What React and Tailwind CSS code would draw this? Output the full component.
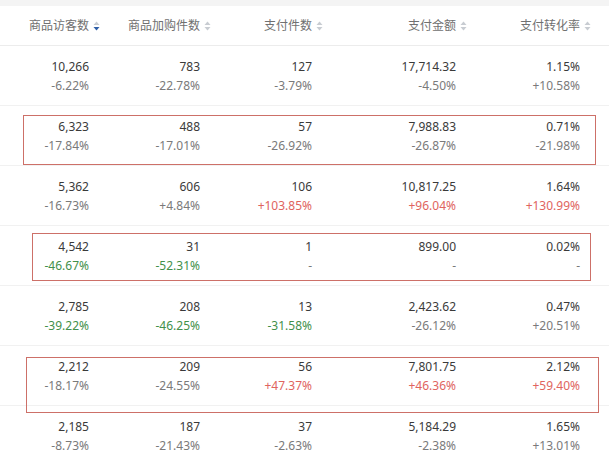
import React from "react";

const columns = ["商品访客数", "商品加购件数", "支付件数", "支付金额", "支付转化率"];
const colWidths = ["w-[105px]", "w-[111px]", "w-[112px]", "w-[144px]", "w-[124px]"];

// g = gray, r = red (up), d = green (down)
const rows = [
  { cells: [["10,266", "-6.22%", "g"], ["783", "-22.78%", "g"], ["127", "-3.79%", "g"], ["17,714.32", "-4.50%", "g"], ["1.15%", "+10.58%", "g"]] },
  { cells: [["6,323", "-17.84%", "g"], ["488", "-17.01%", "g"], ["57", "-26.92%", "g"], ["7,988.83", "-26.87%", "g"], ["0.71%", "-21.98%", "g"]], box: "top-[9px] left-[23px] w-[573px] h-[50px]" },
  { cells: [["5,362", "-16.73%", "g"], ["606", "+4.84%", "g"], ["106", "+103.85%", "r"], ["10,817.25", "+96.04%", "r"], ["1.64%", "+130.99%", "r"]] },
  { cells: [["4,542", "-46.67%", "d"], ["31", "-52.31%", "d"], ["1", "-", "g"], ["899.00", "-", "g"], ["0.02%", "-", "g"]], box: "top-[7px] left-[32px] w-[559px] h-[48px]" },
  { cells: [["2,785", "-39.22%", "d"], ["208", "-46.25%", "d"], ["13", "-31.58%", "d"], ["2,423.62", "-26.12%", "g"], ["0.47%", "+20.51%", "g"]] },
  { cells: [["2,212", "-18.17%", "g"], ["209", "-24.55%", "g"], ["56", "+47.37%", "r"], ["7,801.75", "+46.36%", "r"], ["2.12%", "+59.40%", "r"]], box: "top-[11px] left-[26px] w-[573px] h-[56px]" },
  { cells: [["2,185", "-8.73%", "g"], ["187", "-21.43%", "g"], ["37", "-2.63%", "g"], ["5,184.29", "-2.38%", "g"], ["1.65%", "+13.01%", "g"]] },
];

const tone = {
  g: "text-[#7a7a7a]",
  r: "text-[#e0645e]",
  d: "text-[#42904a]",
};

const SortIcon = ({ active }) => (
  <svg width="7" height="10" viewBox="0 0 7 10" className="ml-[4px]">
    <path d="M3.5 0.5 L6.5 4 L0.5 4 Z" fill="#c8ccd2" />
    <path d="M3.5 9.5 L6.5 6 L0.5 6 Z" fill={active ? "#2f5fa8" : "#c8ccd2"} />
  </svg>
);

const App = () => {
  return (
    <div
      className="w-[609px] h-[461px] overflow-hidden bg-white text-[12px] text-[#3a3a3a]"
      style={{ fontFamily: '"Noto Sans", "Noto Sans CJK SC", sans-serif' }}
    >
      <div className="h-[6px] bg-[#f4f4f4]" />
      {/* Header */}
      <div className="flex h-[40px] items-center border-b border-[#ececec]">
        {columns.map((c, i) => (
          <div key={c} className={`${colWidths[i]} flex items-center justify-end pr-[5px] text-[#707070]`}>
            <span>{c}</span>
            <SortIcon active={i === 0} />
          </div>
        ))}
      </div>

      {/* Rows */}
      {rows.map((row, ri) => (
        <div key={ri} className="relative flex h-[60px] items-center border-b border-[#f1f1f1]">
          {row.cells.map(([val, diff, t], ci) => (
            <div key={ci} className={`${colWidths[ci]} pr-[16px] text-right leading-[19px]`}>
              <div>{val}</div>
              <div className={tone[t]}>{diff}</div>
            </div>
          ))}
          {row.box && (
            <div className={`absolute ${row.box} border-[1.5px] border-[#cd7068] pointer-events-none`} />
          )}
        </div>
      ))}
    </div>
  );
};

export default App;
